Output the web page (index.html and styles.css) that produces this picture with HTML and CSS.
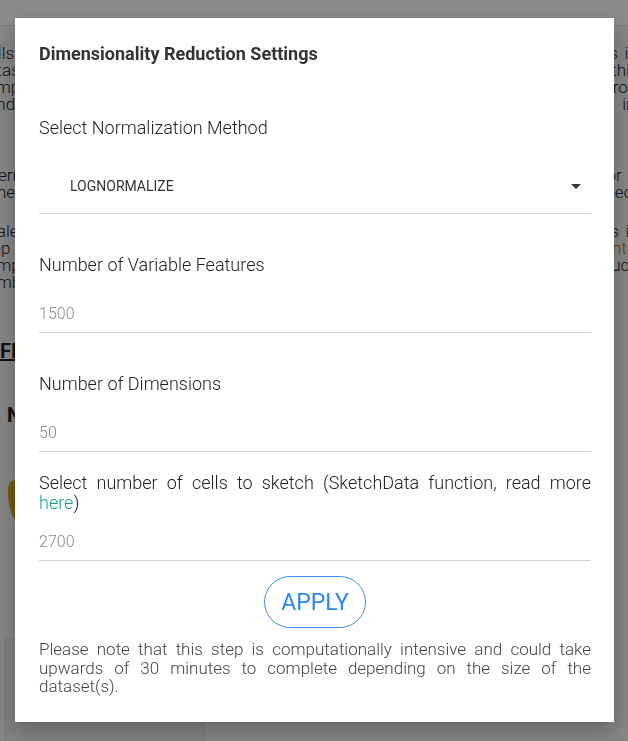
FILE: index.html
```html
<!DOCTYPE html>
<html>
<head>
<meta charset="utf-8">
<link rel="stylesheet" href="styles.css">
</head>
<body>
<div class="page">
  <div class="topbar"></div>
  <div class="content">
    <p class="para p1">Cells are grouped into clusters <span class="blue">based on</span> their similarity of gene expression profiles in the datasets, which can reveal the major cell types and other subpopulations present within the sample; these clusters are then annotated by their marker genes and compared across all conditions, enabling a further characterization of the cell populations of interest in the experimental study</p>
    <p class="para p2">Alternatively, you can use the reduced dimensions to visualize the data in two or three dimensions, which is useful to explore the overall structure of the data and to inspect the quality of the normalization</p>
    <p class="para p3">Scale the data and choose which features to use for the downstream analysis; this is the step where the <span class="purple">highly variable features are selected</span> and the <span class="orange">principal components</span> are computed for the final clustering step; a sketch of the dataset may be used to reduce the number of cells analyzed by the method</p>
    <h3 class="fig-title">FIGURES</h3>
    <h4 class="sub-title">Normalization</h4>
    <div class="chart"><div class="blob"></div></div>
    <div class="card"></div>
  </div>
</div>
<div class="backdrop"></div>
<div class="modal">
  <h4 class="title">Dimensionality Reduction Settings</h4>
  <label class="label label-first">Select Normalization Method</label>
  <div class="select">
    <span class="select-value">LOGNORMALIZE</span>
    <svg class="caret" width="10" height="5" viewBox="0 0 10 5"><path d="M0 0h10L5 5z" fill="#333"/></svg>
  </div>
  <label class="label label-gap">Number of Variable Features</label>
  <div class="input">1500</div>
  <label class="label label-gap">Number of Dimensions</label>
  <div class="input">50</div>
  <label class="label label-wrap">Select number of cells to sketch (SketchData function, read more <a class="link" href="#">here</a>)</label>
  <div class="input input-tight">2700</div>
  <div class="actions"><button class="apply">APPLY</button></div>
  <p class="note">Please note that this step is computationally intensive and could take upwards of 30 minutes to complete depending on the size of the dataset(s).</p>
</div>
</body>
</html>
```
FILE: styles.css
```css
* { box-sizing: border-box; }
html, body { margin: 0; padding: 0; }
body {
  width: 628px;
  height: 741px;
  overflow: hidden;
  background: #f6f6f6;
  font-family: Roboto, "Liberation Sans", sans-serif;
}
.page { width: 628px; height: 741px; overflow: hidden; }
.topbar { height: 26px; background: #ffffff; border-bottom: 1px solid #e4e4e4; }
.content { margin: 0 -40px 0 -22px; padding-top: 19px; color: #222; }
.para {
  margin: 0;
  font-size: 17px;
  line-height: 17px;
  font-weight: 300;
  text-align: justify;
  overflow: hidden;
}
.p1 { height: 68px; }
.p2 { margin-top: 54px; height: 34px; }
.p3 { margin-top: 22px; height: 68px; }
.blue { color: #1f4d9a; }
.orange { color: #b97a10; }
.purple { color: #6a2a6a; }
.fig-title {
  margin: 48px 0 0 22px;
  font-size: 20px;
  line-height: 24px;
  font-weight: 700;
  text-decoration: underline;
}
.sub-title { margin: 40px 0 0 29px; font-size: 20px; line-height: 24px; font-weight: 700; }
.chart { margin: 51px 0 0 22px; height: 75px; }
.blob {
  margin-left: 8px;
  width: 80px;
  height: 75px;
  background: #d4a51a;
  border-radius: 14px 0 0 60px / 10px 0 0 60px;
}
.card {
  margin: 85px 0 0 27px;
  height: 140px;
  width: 200px;
  background: #eeeeee;
  border: 1px solid #dcdcdc;
}
.backdrop {
  position: fixed;
  inset: 0;
  background: rgba(0, 0, 0, 0.46);
}
.modal {
  position: fixed;
  left: 15px;
  top: 18px;
  width: 599px;
  height: 704px;
  background: #fff;
  padding: 26px 23px 0 24px;
  display: flex;
  flex-direction: column;
  box-shadow: 0 8px 20px rgba(0,0,0,0.25);
}
.title {
  margin: 0;
  font-size: 18px;
  line-height: 20px;
  font-weight: 700;
  color: #333;
}
.label {
  display: block;
  font-size: 18px;
  line-height: 20px;
  font-weight: 300;
  color: #222;
}
.label-first { margin-top: 54px; }
.label-gap { margin-top: 41px; }
.label-wrap { margin-top: 21px; text-align: justify; }
.link { color: #1e9e8e; text-decoration: none; }
.select {
  margin-top: 25px;
  height: 51px;
  padding: 13px 10px 0 31px;
  border-bottom: 1px solid #d4d4d4;
  display: flex;
  justify-content: space-between;
  align-items: flex-start;
}
.select-value { font-size: 14px; line-height: 20px; color: #333; }
.caret { margin-top: 8px; }
.input {
  margin-top: 21px;
  height: 37px;
  padding-top: 8px;
  font-size: 16px;
  line-height: 20px;
  font-weight: 300;
  color: #888;
  border-bottom: 1px solid #d4d4d4;
}
.input-tight { margin-top: 11px; }
.actions { margin-top: 15px; display: flex; justify-content: center; }
.apply {
  width: 102px;
  height: 52px;
  border: 1px solid #3f8ff2;
  border-radius: 26px;
  background: #fff;
  color: #2b86f2;
  font-family: Roboto, "Liberation Sans", sans-serif;
  font-size: 23px;
  padding: 0;
}
.note {
  margin: 12px 0 0;
  font-size: 17px;
  line-height: 18.5px;
  font-weight: 300;
  color: #444;
  text-align: justify;
}
```
